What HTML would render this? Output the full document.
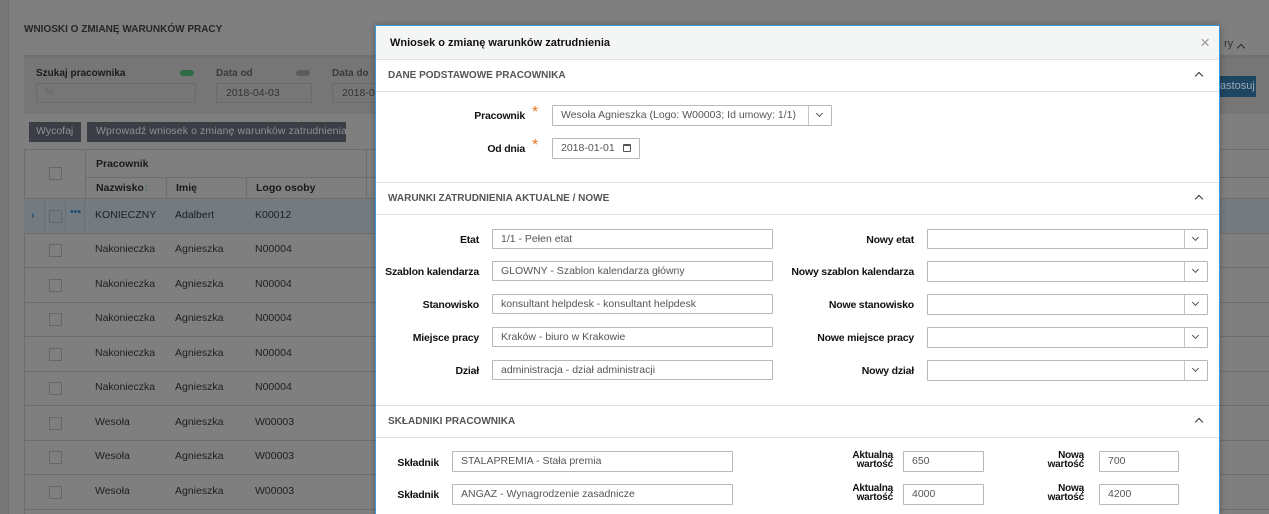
<!DOCTYPE html>
<html><head><meta charset="utf-8">
<style>
*{box-sizing:border-box;margin:0;padding:0}
html,body{width:1269px;height:514px;overflow:hidden}
body{position:relative;background:#7b7b7b;font-family:"Liberation Sans",Arial,sans-serif;font-size:11px;color:#1a1a1a}
.a{position:absolute;white-space:nowrap}
.t{position:absolute;white-space:nowrap}
.b{font-weight:bold}
.inp{position:absolute;border:1px solid #b8b8b8;background:#fff;color:#555;font-size:10.5px;line-height:18px;padding-left:8px;white-space:nowrap;border-radius:1px;overflow:hidden}
.dd{position:absolute;right:0;top:0;bottom:0;width:23px;border-left:1px solid #c4c4c4;background:#fff}
.dd:after{content:"";position:absolute;left:8px;top:5px;width:4px;height:4px;border-right:1.2px solid #555;border-bottom:1.2px solid #555;transform:rotate(45deg)}
.lbl{position:absolute;text-align:right;font-weight:bold;font-size:10.5px;letter-spacing:-0.2px;color:#111;white-space:nowrap}
.sec{position:absolute;left:0;right:0;height:33px;border-bottom:1px solid #e0e0e0;border-top:1px solid #e0e0e0}
.sec span{position:absolute;left:12px;top:10px;font-weight:bold;font-size:10px;color:#555}
.sec i{position:absolute;right:17px;top:13px;width:6px;height:6px;border-left:1.5px solid #333;border-top:1.5px solid #333;transform:rotate(45deg)}
.row{position:absolute;left:24px;width:1250px;height:35px;border-bottom:1px solid #6d6d6d}
.cb{position:absolute;width:13px;height:13px;border:1px solid #666;left:25px;top:11px}
.cell{position:absolute;top:10px;font-size:10.5px;color:#1e1e1e;white-space:nowrap}
.cal{position:absolute;right:8px;top:5px;width:8px;height:8px;border:1.3px solid #555;border-top-width:2.5px;border-radius:1px}
</style></head><body>
<div class="a" style="left:0;top:0;width:8px;height:514px;background:#777"></div>
<div class="a" style="left:8px;top:0;width:1261px;height:514px;background:#7f7f7f;border-left:1px solid #6e6e6e"></div>
<div class="t b" style="left:24px;top:24px;font-size:10px;color:#262626">WNIOSKI O ZMIANĘ WARUNKÓW PRACY</div>
<div class="a" style="left:24px;top:55px;width:1245px;height:59px;background:#767676;border-top:3px solid #707070"></div>
<div class="t b" style="left:36px;top:68px;font-size:10px;color:#1b1b1b">Szukaj pracownika</div>
<div class="a" style="left:180px;top:70px;width:14px;height:6px;border-radius:3px;background:#2e6b45"></div>
<div class="t b" style="left:216px;top:68px;font-size:10px;color:#3a3a3a">Data od</div>
<div class="a" style="left:296px;top:70px;width:14px;height:6px;border-radius:3px;background:#5c5c5c"></div>
<div class="t b" style="left:332px;top:68px;font-size:10px;color:#3a3a3a">Data do</div>
<div class="a" style="left:36px;top:83px;width:160px;height:20px;border:1px solid #6b6b6b;color:#666;padding:3px 8px;font-size:9px">%</div>
<div class="a" style="left:216px;top:83px;width:96px;height:20px;border:1px solid #6b6b6b;color:#333;padding:3px 9px;font-size:10.5px">2018-04-03</div>
<div class="a" style="left:332px;top:83px;width:50px;height:20px;border:1px solid #6b6b6b;color:#333;padding:3px 9px;font-size:10.5px;overflow:hidden">2018-04</div>
<div class="t" style="left:1224px;top:38px;color:#333;font-size:11px">ry</div>
<div class="a" style="left:1238px;top:45px;width:6px;height:6px;border-left:1.5px solid #2a2a2a;border-top:1.5px solid #2a2a2a;transform:rotate(45deg)"></div>
<div class="a" style="left:1219px;top:76px;width:37px;height:21px;background:#1e4662;color:#9aa9b4;padding:4px 0 0 1px;font-size:11px;overflow:hidden">astosuj</div>
<div class="a" style="left:29px;top:122px;width:52px;height:20px;background:#3b3e44;color:#8e9196;padding:3px 0 0 7px;font-size:10.5px">Wycofaj</div>
<div class="a" style="left:87px;top:122px;width:259px;height:20px;background:#3b3e44;color:#8e9196;padding:3px 0 0 9px;font-size:10.5px;letter-spacing:0.1px">Wprowadź wniosek o zmianę warunków zatrudnienia</div>
<!-- table -->
<div class="a" style="left:24px;top:149px;width:1250px;height:365px;border-left:1px solid #6d6d6d;border-top:1px solid #6d6d6d"></div>
<div class="a" style="left:85px;top:150px;width:1px;height:49px;background:#6d6d6d"></div>
<div class="a" style="left:366px;top:150px;width:1px;height:49px;background:#6d6d6d"></div>
<div class="a" style="left:86px;top:177px;width:1183px;height:1px;background:#6d6d6d"></div>
<div class="a" style="left:166px;top:178px;width:1px;height:21px;background:#6d6d6d"></div>
<div class="a" style="left:246px;top:178px;width:1px;height:21px;background:#6d6d6d"></div>
<div class="a" style="left:24px;top:198px;width:1245px;height:1px;background:#6d6d6d"></div>
<div class="a" style="left:49px;top:167px;width:13px;height:13px;border:1px solid #666"></div>
<div class="t b" style="left:96px;top:158px;color:#1a1a1a;font-size:10.5px">Pracownik</div>
<div class="t b" style="left:96px;top:182px;color:#1a1a1a;font-size:10.5px">Nazwisko<span style="color:#2e7a44;font-weight:normal">↑</span></div>
<div class="t b" style="left:176px;top:182px;color:#1a1a1a;font-size:10.5px">Imię</div>
<div class="t b" style="left:256px;top:182px;color:#1a1a1a;font-size:10.5px">Logo osoby</div>
<div class="row" style="top:199px;background:#737a80"><div class="a" style="left:20px;top:0;width:1px;height:34px;background:#6a6f73"></div><div class="a" style="left:41px;top:0;width:1px;height:34px;background:#6a6f73"></div><div class="a" style="left:60px;top:0;width:1px;height:34px;background:#6a6f73"></div><div class="cell" style="left:7px;color:#1c4a6e;font-weight:bold">›</div><div class="cb"></div><div class="cell" style="left:46px;top:7px;color:#1c4a6e;font-weight:bold">•••</div><div class="cell" style="left:71px">KONIECZNY</div><div class="cell" style="left:151px">Adalbert</div><div class="cell" style="left:231px">K00012</div></div>
<div class="row" style="top:233px"><div class="cb"></div><div class="cell" style="left:71px">Nakonieczka</div><div class="cell" style="left:151px">Agnieszka</div><div class="cell" style="left:231px">N00004</div></div>
<div class="row" style="top:268px"><div class="cb"></div><div class="cell" style="left:71px">Nakonieczka</div><div class="cell" style="left:151px">Agnieszka</div><div class="cell" style="left:231px">N00004</div></div>
<div class="row" style="top:302px"><div class="cb"></div><div class="cell" style="left:71px">Nakonieczka</div><div class="cell" style="left:151px">Agnieszka</div><div class="cell" style="left:231px">N00004</div></div>
<div class="row" style="top:337px"><div class="cb"></div><div class="cell" style="left:71px">Nakonieczka</div><div class="cell" style="left:151px">Agnieszka</div><div class="cell" style="left:231px">N00004</div></div>
<div class="row" style="top:371px"><div class="cb"></div><div class="cell" style="left:71px">Nakonieczka</div><div class="cell" style="left:151px">Agnieszka</div><div class="cell" style="left:231px">N00004</div></div>
<div class="row" style="top:406px"><div class="cb"></div><div class="cell" style="left:71px">Wesoła</div><div class="cell" style="left:151px">Agnieszka</div><div class="cell" style="left:231px">W00003</div></div>
<div class="row" style="top:440px"><div class="cb"></div><div class="cell" style="left:71px">Wesoła</div><div class="cell" style="left:151px">Agnieszka</div><div class="cell" style="left:231px">W00003</div></div>
<div class="row" style="top:475px"><div class="cb"></div><div class="cell" style="left:71px">Wesoła</div><div class="cell" style="left:151px">Agnieszka</div><div class="cell" style="left:231px">W00003</div></div>

<!-- modal -->
<div class="a" style="left:375px;top:25px;width:845px;height:495px;background:#fff;border:1px solid #3a9ad9;box-shadow:0 0 6px rgba(0,0,0,.3);white-space:normal">
 <div class="a" style="left:0;top:0;right:0;height:33px;background:#f4f6f6"></div>
 <div class="t b" style="left:14px;top:11px;font-size:11px;color:#111">Wniosek o zmianę warunków zatrudnienia</div>
 <div class="t" style="right:9px;top:7px;font-size:17px;color:#999">×</div>
 <div class="sec" style="top:33px"><span>DANE PODSTAWOWE PRACOWNIKA</span><i></i></div>
 <div class="lbl" style="right:694px;top:84px">Pracownik</div><div class="t" style="left:156px;top:78px;color:#e87722;font-size:16px">*</div>
 <div class="inp" style="left:176px;top:79px;width:280px;height:21px">Wesoła Agnieszka (Logo: W00003; Id umowy: 1/1)<div class="dd"></div></div>
 <div class="lbl" style="right:694px;top:117px">Od dnia</div><div class="t" style="left:156px;top:111px;color:#e87722;font-size:16px">*</div>
 <div class="inp" style="left:176px;top:112px;width:88px;height:21px">2018-01-01<div class="cal"></div></div>
 <div class="sec" style="top:156px"><span>WARUNKI ZATRUDNIENIA AKTUALNE / NOWE</span><i></i></div>
 <div class="lbl" style="right:740px;top:208px">Etat</div><div class="inp" style="left:116px;top:203px;width:281px;height:20px">1/1 - Pełen etat</div>
 <div class="lbl" style="right:740px;top:240px">Szablon kalendarza</div><div class="inp" style="left:116px;top:235px;width:281px;height:20px">GLOWNY - Szablon kalendarza główny</div>
 <div class="lbl" style="right:740px;top:273px">Stanowisko</div><div class="inp" style="left:116px;top:268px;width:281px;height:20px">konsultant helpdesk - konsultant helpdesk</div>
 <div class="lbl" style="right:740px;top:306px">Miejsce pracy</div><div class="inp" style="left:116px;top:301px;width:281px;height:20px">Kraków - biuro w Krakowie</div>
 <div class="lbl" style="right:740px;top:339px">Dział</div><div class="inp" style="left:116px;top:334px;width:281px;height:20px">administracja - dział administracji</div>
 <div class="lbl" style="right:305px;top:208px">Nowy etat</div><div class="inp" style="left:551px;top:203px;width:281px;height:20px"><div class="dd"></div></div>
 <div class="lbl" style="right:305px;top:240px">Nowy szablon kalendarza</div><div class="inp" style="left:551px;top:235px;width:281px;height:21px"><div class="dd"></div></div>
 <div class="lbl" style="right:305px;top:273px">Nowe stanowisko</div><div class="inp" style="left:551px;top:268px;width:281px;height:21px"><div class="dd"></div></div>
 <div class="lbl" style="right:305px;top:306px">Nowe miejsce pracy</div><div class="inp" style="left:551px;top:301px;width:281px;height:21px"><div class="dd"></div></div>
 <div class="lbl" style="right:305px;top:339px">Nowy dział</div><div class="inp" style="left:551px;top:334px;width:281px;height:21px"><div class="dd"></div></div>
 <div class="sec" style="top:379px"><span>SKŁADNIKI PRACOWNIKA</span><i></i></div>
 <div class="lbl" style="right:780px;top:431px">Składnik</div><div class="inp" style="left:76px;top:425px;width:281px;height:21px">STALAPREMIA - Stała premia</div>
 <div class="lbl" style="right:780px;top:463px">Składnik</div><div class="inp" style="left:76px;top:458px;width:281px;height:21px">ANGAZ - Wynagrodzenie zasadnicze</div>
 <div class="lbl" style="right:326px;top:425px;line-height:9px;font-size:10px">Aktualną<br>wartość</div><div class="inp" style="left:527px;top:425px;width:81px;height:21px">650</div>
 <div class="lbl" style="right:326px;top:458px;line-height:9px;font-size:10px">Aktualną<br>wartość</div><div class="inp" style="left:527px;top:458px;width:81px;height:21px">4000</div>
 <div class="lbl" style="right:135px;top:425px;line-height:9px;font-size:10px">Nową<br>wartość</div><div class="inp" style="left:723px;top:425px;width:80px;height:21px">700</div>
 <div class="lbl" style="right:135px;top:458px;line-height:9px;font-size:10px">Nową<br>wartość</div><div class="inp" style="left:723px;top:458px;width:80px;height:21px">4200</div>
</div>
</body></html>
